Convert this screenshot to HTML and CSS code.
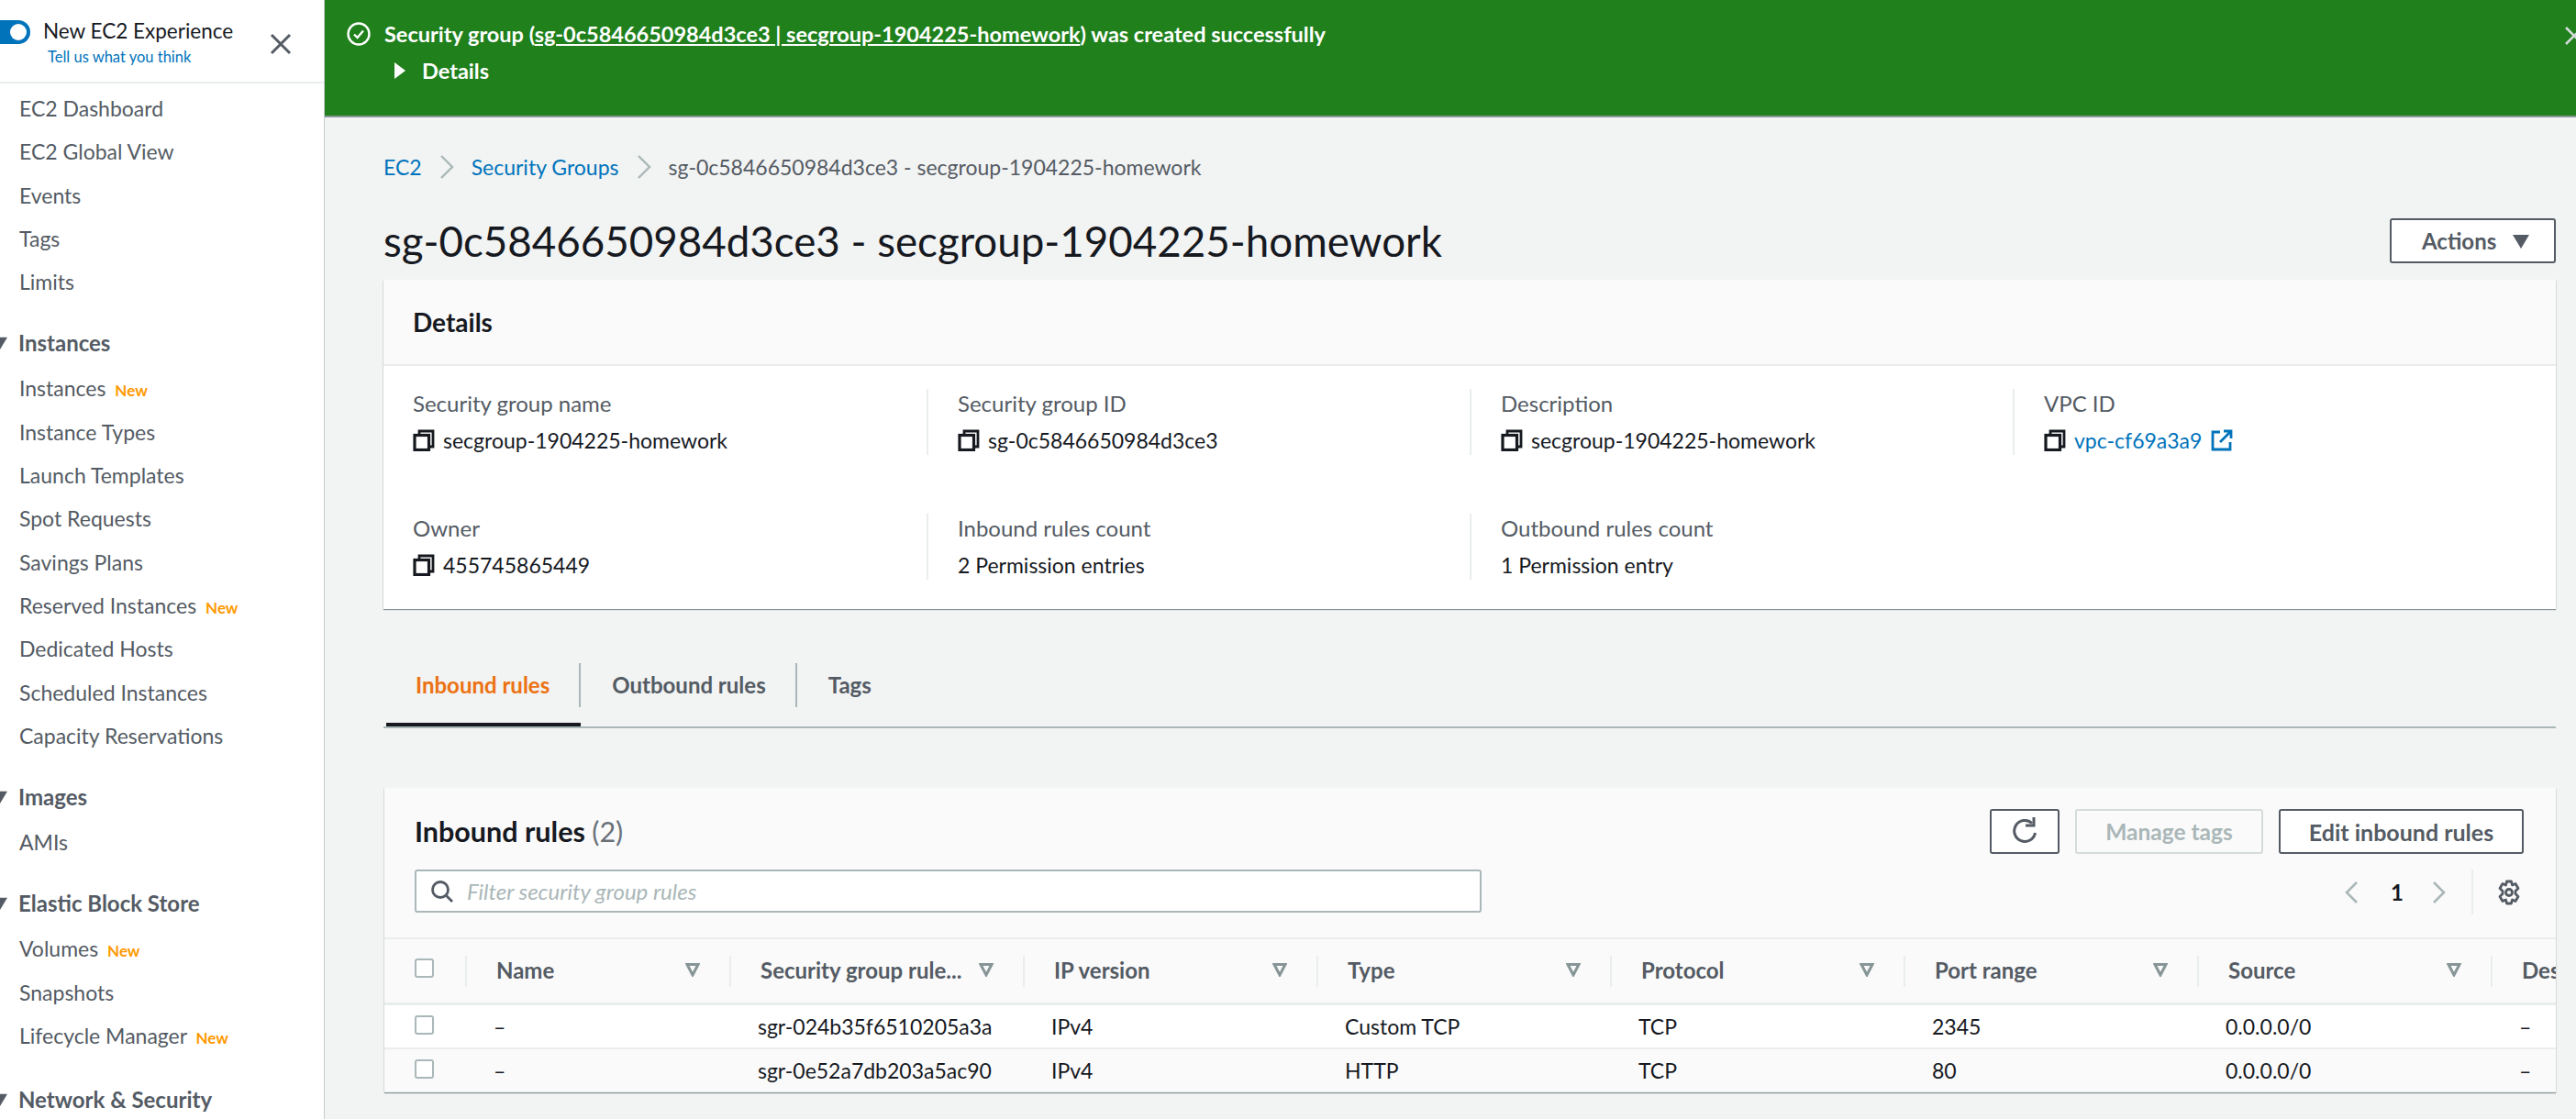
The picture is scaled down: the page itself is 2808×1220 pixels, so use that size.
FILE: index.html
```html
<!DOCTYPE html>
<html lang="en">
<head>
    <meta charset="UTF-8">
    <title>Security group details</title>
    <link rel="stylesheet" href="styles.css">
</head>
<body>
    <svg class="icon-defs" width="0" height="0">
        <symbol id="i-copy" viewBox="0 0 24 24"><path d="M7 5V2h15v17h-4" fill="none" stroke="currentColor" stroke-width="2.8"/><rect x="2" y="6.500" width="15.500" height="16" fill="none" stroke="currentColor" stroke-width="3.200"/></symbol>
        <symbol id="i-caret" viewBox="0 0 18 18"><path d="M0 2h18l-9 15z" fill="currentColor"/></symbol>
        <symbol id="i-sort" viewBox="0 0 16 16"><path d="M2 2.500h12L8 14z" fill="none" stroke="currentColor" stroke-width="3"/></symbol>
    </svg>

    <aside class="sidebar">
        <div class="side-head">
            <div class="side-title">
                <div class="toggle"><span class="toggle-knob"></span></div>
                <div>
                    <div class="exp-name">New EC2 Experience</div>
                    <a class="exp-link">Tell us what you think</a>
                </div>
            </div>
            <svg class="side-close" width="24" height="24" viewBox="0 0 24 24"><path d="M2 2l20 20M22 2L2 22" stroke="#545b64" stroke-width="3"/></svg>
        </div>
        <nav class="side-nav">
            <a class="nav-item">EC2 Dashboard</a>
            <a class="nav-item">EC2 Global View</a>
            <a class="nav-item">Events</a>
            <a class="nav-item">Tags</a>
            <a class="nav-item">Limits</a>

            <div class="nav-head"><svg class="nav-caret" width="16" height="16"><use href="#i-caret"/></svg>Instances</div>
            <a class="nav-item">Instances <span class="new">New</span></a>
            <a class="nav-item">Instance Types</a>
            <a class="nav-item">Launch Templates</a>
            <a class="nav-item">Spot Requests</a>
            <a class="nav-item">Savings Plans</a>
            <a class="nav-item">Reserved Instances <span class="new">New</span></a>
            <a class="nav-item">Dedicated Hosts</a>
            <a class="nav-item">Scheduled Instances</a>
            <a class="nav-item">Capacity Reservations</a>

            <div class="nav-head"><svg class="nav-caret" width="16" height="16"><use href="#i-caret"/></svg>Images</div>
            <a class="nav-item">AMIs</a>

            <div class="nav-head"><svg class="nav-caret" width="16" height="16"><use href="#i-caret"/></svg>Elastic Block Store</div>
            <a class="nav-item">Volumes <span class="new">New</span></a>
            <a class="nav-item">Snapshots</a>
            <a class="nav-item">Lifecycle Manager <span class="new">New</span></a>

            <div class="nav-head nav-head-last"><svg class="nav-caret" width="16" height="16"><use href="#i-caret"/></svg>Network &amp; Security</div>
        </nav>
    </aside>

    <div class="main">
        <div class="flash">
            <div class="flash-line">
                <svg class="flash-check" width="26" height="26" viewBox="0 0 26 26"><circle cx="13" cy="13" r="11.500" fill="none" stroke="#fff" stroke-width="2.400"/><path d="M8 13.500l3.600 3.600L18 9.500" fill="none" stroke="#fff" stroke-width="2.400"/></svg>
                <span>Security group (<u>sg-0c5846650984d3ce3 | secgroup-1904225-homework</u>) was created successfully</span>
            </div>
            <div class="flash-details">
                <svg width="12" height="18" viewBox="0 0 12 18"><path d="M0 0l12 9-12 9z" fill="#fff"/></svg>
                <span>Details</span>
            </div>
            <svg class="flash-close" width="22" height="22" viewBox="0 0 22 22"><path d="M2 2l18 18M20 2L2 20" stroke="#d5dbdb" stroke-width="2.600"/></svg>
        </div>

        <div class="content">
            <div class="crumbs">
                <a>EC2</a>
                <svg width="16" height="26" viewBox="0 0 16 26"><path d="M2 1l12 12L2 25" fill="none" stroke="#aab7b8" stroke-width="2.400"/></svg>
                <a>Security Groups</a>
                <svg width="16" height="26" viewBox="0 0 16 26"><path d="M2 1l12 12L2 25" fill="none" stroke="#aab7b8" stroke-width="2.400"/></svg>
                <span>sg-0c5846650984d3ce3 - secgroup-1904225-homework</span>
            </div>

            <div class="title-row">
                <h1>sg-0c5846650984d3ce3 - secgroup-1904225-homework</h1>
                <button class="btn btn-actions">Actions <svg width="18" height="18"><use href="#i-caret"/></svg></button>
            </div>

            <section class="card">
                <h2 class="card-head">Details</h2>
                <div class="fields">
                    <div class="field">
                        <div class="field-label">Security group name</div>
                        <div class="field-value"><svg class="copy" width="24" height="24"><use href="#i-copy"/></svg>secgroup-1904225-homework</div>
                    </div>
                    <div class="field">
                        <div class="field-label">Security group ID</div>
                        <div class="field-value"><svg class="copy" width="24" height="24"><use href="#i-copy"/></svg>sg-0c5846650984d3ce3</div>
                    </div>
                    <div class="field">
                        <div class="field-label">Description</div>
                        <div class="field-value"><svg class="copy" width="24" height="24"><use href="#i-copy"/></svg>secgroup-1904225-homework</div>
                    </div>
                    <div class="field">
                        <div class="field-label">VPC ID</div>
                        <div class="field-value"><svg class="copy" width="24" height="24"><use href="#i-copy"/></svg><a class="link">vpc-cf69a3a9</a>
                            <svg class="ext" width="24" height="24" viewBox="0 0 24 24"><path d="M10 3H2v19h19v-8M14 2h8v8M22 2L10 14" fill="none" stroke="#0073bb" stroke-width="2.800"/></svg>
                        </div>
                    </div>
                    <div class="field">
                        <div class="field-label">Owner</div>
                        <div class="field-value"><svg class="copy" width="24" height="24"><use href="#i-copy"/></svg>455745865449</div>
                    </div>
                    <div class="field">
                        <div class="field-label">Inbound rules count</div>
                        <div class="field-value">2 Permission entries</div>
                    </div>
                    <div class="field">
                        <div class="field-label">Outbound rules count</div>
                        <div class="field-value">1 Permission entry</div>
                    </div>
                </div>
            </section>

            <div class="tabs">
                <div class="tab active"><span>Inbound rules</span></div>
                <div class="tab"><span>Outbound rules</span></div>
                <div class="tab"><span>Tags</span></div>
            </div>

            <section class="panel">
                <div class="panel-head">
                    <div class="panel-left">
                        <h2 class="panel-title">Inbound rules <span class="count">(2)</span></h2>
                        <div class="search">
                            <svg width="26" height="26" viewBox="0 0 26 26"><circle cx="11" cy="11" r="8.500" fill="none" stroke="#545b64" stroke-width="2.800"/><path d="M17 17l7 7" stroke="#545b64" stroke-width="2.800"/></svg>
                            <span>Filter security group rules</span>
                        </div>
                    </div>
                    <div class="panel-right">
                        <div class="actions">
                            <button class="btn btn-icon"><svg width="28" height="30" viewBox="0 0 28 30"><path d="M25.500 18a11.500 11.500 0 1 1-3.500-10.500" fill="none" stroke="#545b64" stroke-width="3"/><path d="M24 1v9h-9" fill="none" stroke="#545b64" stroke-width="3"/></svg></button>
                            <button class="btn btn-off">Manage tags</button>
                            <button class="btn btn-edit">Edit inbound rules</button>
                        </div>
                        <div class="pager">
                            <svg width="16" height="24" viewBox="0 0 16 24"><path d="M14 1L3 12l11 11" fill="none" stroke="#aab7b8" stroke-width="2.600"/></svg>
                            <b>1</b>
                            <svg width="16" height="24" viewBox="0 0 16 24"><path d="M2 1l11 11L2 23" fill="none" stroke="#aab7b8" stroke-width="2.600"/></svg>
                            <span class="pager-sep"></span>
                            <svg width="26" height="28" viewBox="0 0 26 28"><path d="M10.500 2h5l1 4 3.500-1.500 3 5-3 3v3l3 3-3 5-3.500-1.500-1 4h-5l-1-4L6 23.500l-3-5 3-3v-3l-3-3 3-5L9.500 6z" fill="none" stroke="#545b64" stroke-width="2.800" stroke-linejoin="round"/><circle cx="13" cy="14" r="3.500" fill="none" stroke="#545b64" stroke-width="2.800"/></svg>
                        </div>
                    </div>
                </div>
                <div class="table-wrap">
                    <table>
                        <colgroup>
                            <col class="col-check"><col class="col-name"><col class="col-std"><col class="col-std"><col class="col-std"><col class="col-std"><col class="col-std"><col class="col-std"><col class="col-std">
                        </colgroup>
                        <thead>
                            <tr>
                                <th><span class="checkbox"></span></th>
                                <th><div class="th-in">Name <svg width="16" height="16"><use href="#i-sort"/></svg></div></th>
                                <th><div class="th-in">Security group rule... <svg width="16" height="16"><use href="#i-sort"/></svg></div></th>
                                <th><div class="th-in">IP version <svg width="16" height="16"><use href="#i-sort"/></svg></div></th>
                                <th><div class="th-in">Type <svg width="16" height="16"><use href="#i-sort"/></svg></div></th>
                                <th><div class="th-in">Protocol <svg width="16" height="16"><use href="#i-sort"/></svg></div></th>
                                <th><div class="th-in">Port range <svg width="16" height="16"><use href="#i-sort"/></svg></div></th>
                                <th><div class="th-in">Source <svg width="16" height="16"><use href="#i-sort"/></svg></div></th>
                                <th><div class="th-in">Description</div></th>
                            </tr>
                        </thead>
                        <tbody>
                            <tr>
                                <td><span class="checkbox"></span></td>
                                <td>–</td>
                                <td>sgr-024b35f6510205a3a</td>
                                <td>IPv4</td>
                                <td>Custom TCP</td>
                                <td>TCP</td>
                                <td>2345</td>
                                <td>0.0.0.0/0</td>
                                <td>–</td>
                            </tr>
                            <tr>
                                <td><span class="checkbox"></span></td>
                                <td>–</td>
                                <td>sgr-0e52a7db203a5ac90</td>
                                <td>IPv4</td>
                                <td>HTTP</td>
                                <td>TCP</td>
                                <td>80</td>
                                <td>0.0.0.0/0</td>
                                <td>–</td>
                            </tr>
                        </tbody>
                    </table>
                </div>
            </section>
        </div>
    </div>
</body>
</html>
```

FILE: styles.css
```css
html, body {
    margin: 0;
    height: 1220px;
    overflow: hidden;
}
body {
    display: flex;
    font-family: Lato, "Liberation Sans", sans-serif;
    font-size: 24px;
    color: #16191f;
    background: #f2f3f3;
}
.icon-defs {
    position: absolute;
}
a {
    text-decoration: none;
}
button {
    font-family: inherit;
}

/* sidebar */
.sidebar {
    flex: none;
    width: 354px;
    height: 1220px;
    box-sizing: border-box;
    background: #fff;
    border-right: 1px solid #c4cccc;
    overflow: hidden;
}
.side-head {
    display: flex;
    justify-content: space-between;
    height: 91px;
    box-sizing: border-box;
    padding: 19px 35px 0 0;
    border-bottom: 2px solid #eaeded;
}
.side-title {
    display: flex;
    gap: 14px;
}
.toggle {
    flex: none;
    width: 46px;
    height: 26px;
    margin: 3px 0 0 -13px;
    box-sizing: border-box;
    padding: 4px;
    display: flex;
    justify-content: flex-end;
    background: #0073bb;
    border-radius: 13px;
}
.toggle-knob {
    width: 18px;
    height: 18px;
    background: #fff;
    border-radius: 50%;
}
.exp-name {
    line-height: 30px;
    font-size: 22.500px;
}
.exp-link {
    display: block;
    margin: 2px 0 0 5px;
    font-size: 16.500px;
    line-height: 22px;
    color: #0073bb;
}
.side-close {
    margin-top: 17px;
}
.side-nav {
    padding-top: 4px;
}
.nav-item {
    display: block;
    height: 47.300px;
    line-height: 47px;
    padding-left: 21px;
    font-size: 23px;
    color: #545b64;
    white-space: nowrap;
}
.new {
    margin-left: 4px;
    font-size: 17px;
    font-weight: 700;
    color: #ff9900;
}
.nav-head {
    display: flex;
    align-items: center;
    gap: 12px;
    height: 47px;
    margin: 19px 0 3px -8px;
    font-weight: 700;
    color: #545b64;
    white-space: nowrap;
}
.nav-head-last {
    margin-top: 22px;
}
.nav-caret {
    flex: none;
}

/* main column */
.main {
    flex: 1;
    min-width: 0;
}
.flash {
    position: relative;
    height: 128px;
    box-sizing: border-box;
    padding: 21px 0 0 24px;
    background: #1f801c;
    border-bottom: 2px solid #879596;
    color: #fff;
    font-weight: 700;
    font-size: 23.500px;
}
.flash-line {
    display: flex;
    align-items: center;
    gap: 15px;
    height: 32px;
}
.flash-details {
    display: flex;
    align-items: center;
    gap: 18px;
    height: 32px;
    margin: 8px 0 0 52px;
}
.flash-close {
    position: absolute;
    top: 28px;
    right: -9px;
}
.content {
    padding: 38px 22px 0 64px;
}
.crumbs {
    display: flex;
    align-items: center;
    gap: 19px;
    height: 32px;
    color: #545b64;
    font-size: 23px;
}
.crumbs a, .link {
    color: #0073bb;
}
.title-row {
    display: flex;
    align-items: center;
    justify-content: space-between;
    margin-top: 40px;
}
h1 {
    margin: 0;
    font-size: 45.700px;
    font-weight: 400;
    line-height: 49px;
}
.btn {
    height: 49px;
    box-sizing: border-box;
    background: #fff;
    border: 2px solid #545b64;
    border-radius: 3px;
    color: #545b64;
    font-size: 24px;
    font-weight: 700;
}
.btn-actions {
    display: flex;
    align-items: center;
    gap: 18px;
    width: 181px;
    padding-left: 33px;
}

/* details card */
.card {
    margin-top: 18px;
    height: 359px;
    box-sizing: border-box;
    background: #fff;
    box-shadow: 0 1px 1px 0 #879596, 1px 0 1px -1px #aab7b8, -1px 0 1px -1px #aab7b8;
}
.card-head {
    margin: 0;
    height: 94px;
    box-sizing: border-box;
    padding-left: 32px;
    line-height: 92px;
    font-size: 28px;
    background: #fafafa;
    border-bottom: 2px solid #eaeded;
}
.fields {
    display: grid;
    grid-template-columns: repeat(4, 1fr);
    row-gap: 64px;
    padding-top: 25px;
}
.field {
    height: 72px;
    padding-left: 32px;
    border-left: 2px solid #eaeded;
}
.field:nth-child(4n + 1) {
    border-left: 0;
}
.field-label {
    height: 32px;
    line-height: 32px;
    color: #545b64;
}
.field-value {
    display: flex;
    align-items: center;
    margin-top: 7px;
    line-height: 34px;
    font-size: 23px;
}
.copy {
    flex: none;
    margin-right: 9px;
}
.ext {
    margin-left: 10px;
}

/* tabs */
.tabs {
    display: flex;
    margin-top: 38px;
    padding-left: 3px;
    border-bottom: 2px solid #aab7b8;
}
.tab {
    display: flex;
    align-items: center;
    height: 90px;
    box-sizing: border-box;
    border-bottom: 4px solid transparent;
    font-weight: 700;
    color: #545b64;
}
.tab span {
    padding: 0 32px;
    margin-top: 3px;
    line-height: 48px;
    border-right: 2px solid #aab7b8;
}
.tab + .tab span {
    padding-left: 34px;
}
.tab:last-child span {
    border-right: 0;
}
.tab.active {
    border-bottom-color: #16191f;
    color: #ec7211;
}

/* rules panel */
.panel {
    margin: 65px 0 0 1px;
    background: #fff;
    box-shadow: 0 1px 1px 0 #879596, 1px 0 1px -1px #aab7b8, -1px 0 1px -1px #aab7b8;
}
.panel-head {
    display: flex;
    justify-content: space-between;
    height: 165px;
    box-sizing: border-box;
    padding: 23px 35px 0 33px;
    background: #fafafa;
    border-bottom: 2px solid #eaeded;
}
.panel-title {
    margin: 0 0 17px;
    line-height: 49px;
    font-size: 30.500px;
}
.count {
    font-weight: 400;
    color: #687078;
}
.search {
    display: flex;
    align-items: center;
    gap: 14px;
    width: 1163px;
    height: 47px;
    box-sizing: border-box;
    padding-left: 15px;
    background: #fff;
    border: 2px solid #aab7b8;
    border-radius: 3px;
    font-style: italic;
    color: #aab7b8;
}
.actions {
    display: flex;
    gap: 17px;
}
.btn-icon {
    width: 76px;
    padding: 2px 0 0;
}
.btn-off {
    width: 205px;
    border-color: #d5dbdb;
    color: #aab7b8;
    background: transparent;
    font-size: 24.500px;
}
.btn-edit {
    width: 267px;
    font-size: 25px;
}
.pager {
    display: flex;
    align-items: center;
    justify-content: flex-end;
    height: 49px;
    margin-top: 17px;
    padding-right: 3px;
}
.pager b {
    margin: 0 31px 0 35px;
    font-size: 24px;
}
.pager-sep {
    width: 2px;
    height: 49px;
    margin: 0 26px 0 27px;
    background: #eaeded;
}
.table-wrap {
    overflow: hidden;
}
table {
    table-layout: fixed;
    width: 2616px;
    border-collapse: collapse;
}
.col-check {
    width: 88px;
}
.col-name {
    width: 288px;
}
.col-std {
    width: 320px;
}
th {
    height: 69px;
    padding: 0;
    background: #fafafa;
    border-bottom: 3px solid #eaeded;
    font-weight: 700;
    color: #545b64;
    text-align: left;
}
th .checkbox {
    top: -3px;
}
.th-in {
    display: flex;
    align-items: center;
    justify-content: space-between;
    height: 34px;
    box-sizing: border-box;
    padding: 0 32px 3px;
    border-left: 2px solid #eaeded;
    white-space: nowrap;
}
.th-in svg {
    color: #879596;
    margin-top: 0;
}
td {
    height: 46px;
    padding: 0 0 0 31px;
    border-bottom: 2px solid #eaeded;
    font-size: 23px;
    white-space: nowrap;
}
tbody tr:nth-child(2) td {
    background: #fafafa;
    border-bottom: 1px solid #eaeded;
}
td:first-child, th:first-child {
    padding-left: 33px;
}
.checkbox {
    display: block;
    position: relative;
    top: -2px;
    width: 21px;
    height: 21px;
    box-sizing: border-box;
    background: #fff;
    border: 2px solid #aab7b8;
    border-radius: 3px;
}
```
